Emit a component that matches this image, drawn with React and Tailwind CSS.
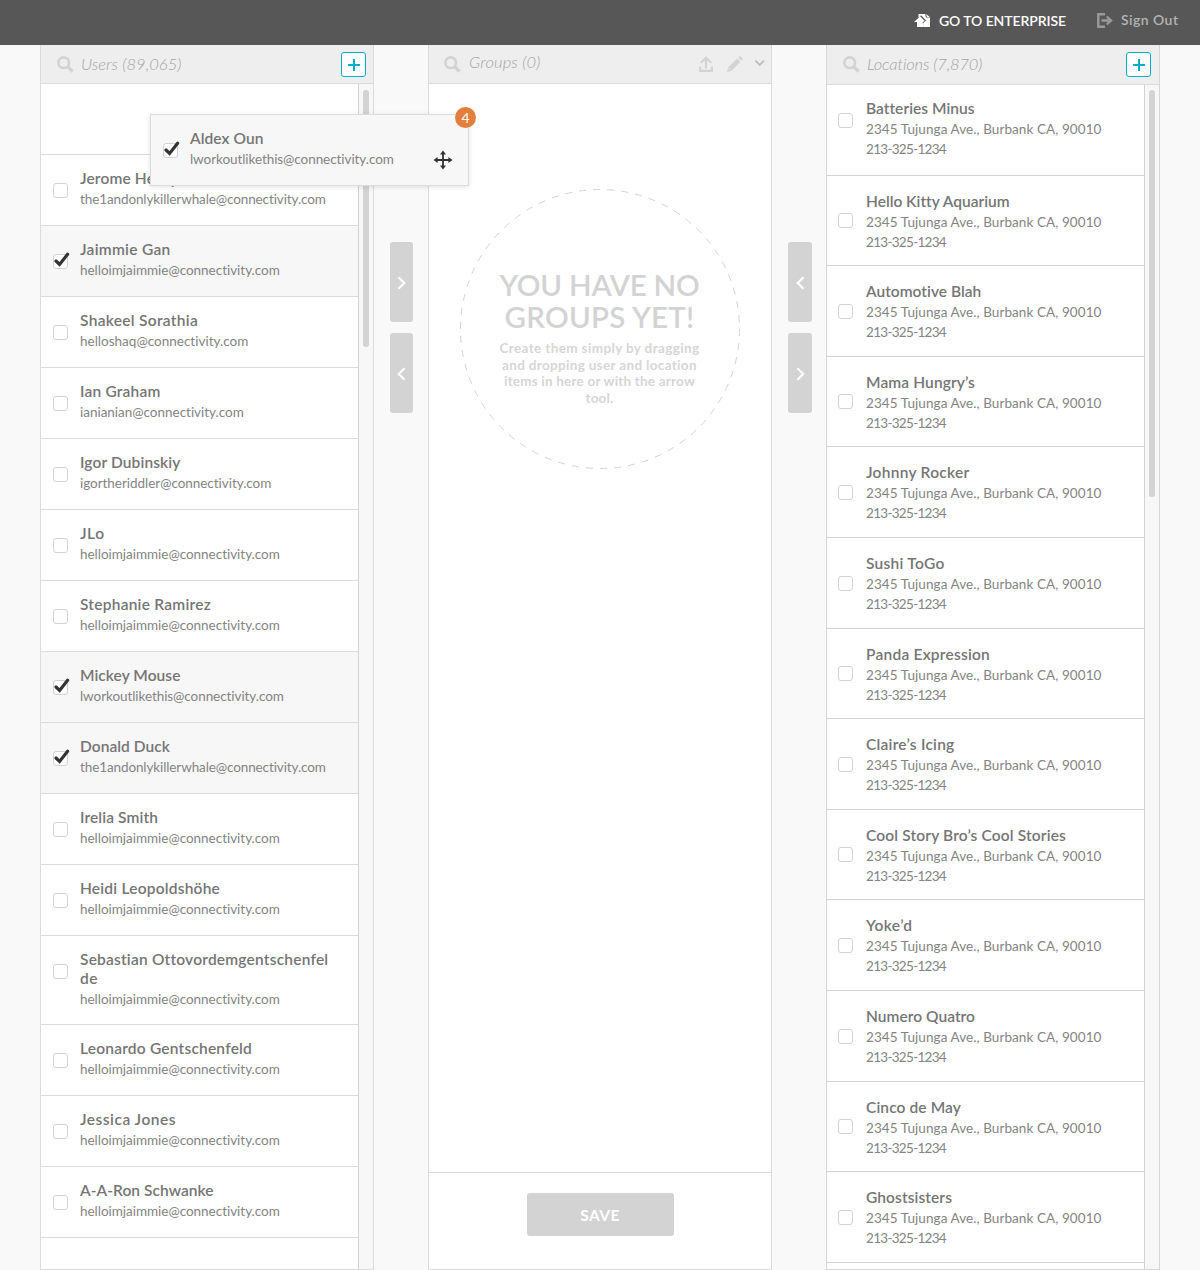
import { useLayoutEffect, useRef, useState } from "react";

/* Text run whose tracking is computed so that it fills a given width. */
function Fit({ w, className = "", children }) {
  const ref = useRef(null);
  const [spacing, setSpacing] = useState(0);
  useLayoutEffect(() => {
    const natural = ref.current.getBoundingClientRect().width;
    setSpacing((w - natural) / children.length);
  }, []);
  return (
    <span className={"block w-max whitespace-pre " + className}>
      <span ref={ref} style={{ letterSpacing: spacing + "px" }}>
        {children}
      </span>
    </span>
  );
}

const HELLO = ["helloimjaimmie@connectivity.com", 200];
const WORKOUT = ["lworkoutlikethis@connectivity.com", 204];
const WHALE = ["the1andonlykillerwhale@connectivity.com", 246];

const users = [
  { name: [["Jerome Henry", 98]], mail: WHALE },
  { name: [["Jaimmie Gan", 90.5]], mail: HELLO, on: true },
  { name: [["Shakeel Sorathia", 118]], mail: ["helloshaq@connectivity.com", 168.5] },
  { name: [["Ian Graham", 80.5]], mail: ["ianianian@connectivity.com", 164] },
  { name: [["Igor Dubinskiy", 100.5]], mail: ["igortheriddler@connectivity.com", 191.5] },
  { name: [["JLo", 24.5]], mail: HELLO },
  { name: [["Stephanie Ramirez", 131]], mail: HELLO },
  { name: [["Mickey Mouse", 100.5]], mail: WORKOUT, on: true },
  { name: [["Donald Duck", 90]], mail: WHALE, on: true },
  { name: [["Irelia Smith", 78]], mail: HELLO },
  { name: [["Heidi Leopoldshöhe", 140]], mail: HELLO },
  { name: [["Sebastian Ottovordemgentschenfel", 248], ["de", 18]], mail: HELLO },
  { name: [["Leonardo Gentschenfeld", 172]], mail: HELLO },
  { name: [["Jessica Jones", 96]], mail: HELLO },
  { name: [["A-A-Ron Schwanke", 133.5]], mail: HELLO },
];

const locations = [
  ["Batteries Minus", 108, "h-[91px]"],
  ["Hello Kitty Aquarium", 143, "h-[90px]"],
  ["Automotive Blah", 115.5, "h-[91px]"],
  ["Mama Hungry’s", 109, "h-[90px]"],
  ["Johnny Rocker", 103.5, "h-[91px]"],
  ["Sushi ToGo", 78.5, "h-[91px]"],
  ["Panda Expression", 124, "h-[90px]"],
  ["Claire’s Icing", 88.5, "h-[91px]"],
  ["Cool Story Bro’s Cool Stories", 200, "h-[90px]"],
  ["Yoke’d", 46.5, "h-[91px]"],
  ["Numero Quatro", 109, "h-[91px]"],
  ["Cinco de May", 95, "h-[90px]"],
  ["Ghostsisters", 86, "h-[91px]"],
];

function SearchIcon() {
  return (
    <svg className="h-[17px] w-[17px] shrink-0" viewBox="0 0 17 17" fill="none" stroke="#d3d3d3">
      <circle cx="6.7" cy="6.7" r="5.3" strokeWidth="2.7" />
      <path d="M10.8 10.8 15.6 15.6" strokeWidth="3.4" />
    </svg>
  );
}

function PlusButton() {
  return (
    <button className="flex h-[25px] w-[25px] shrink-0 items-center justify-center rounded-[3px] border border-[#00adc6] bg-white">
      <svg className="mt-px ml-px h-[12px] w-[12px]" viewBox="0 0 12 12" stroke="#00adc6" strokeWidth="2">
        <path d="M6 0v12M0 6h12" />
      </svg>
    </button>
  );
}

function Checkbox({ on, className = "" }) {
  return (
    <span className={"block h-[15px] w-[15px] shrink-0 rounded-[3px] border border-[#d3d3d3] bg-white " + className}>
      {on && (
        <svg className="-mt-[3px] h-[18px] w-[18px]" viewBox="0 0 18 18" fill="none" stroke="#333" strokeWidth="3.2">
          <path d="M2 9 5.6 12.4 13.6 2.3" strokeLinejoin="miter" strokeLinecap="round" />
        </svg>
      )}
    </span>
  );
}

function UserBody({ user }) {
  return (
    <>
      <Checkbox on={user.on} className="mt-[28px]" />
      <div className="pt-[14px] pl-[12px]">
        {user.name.map(([t, w]) => (
          <Fit key={t} w={w} className="text-[15.5px] leading-[19px] font-semibold text-[#757575]">{t}</Fit>
        ))}
        <Fit w={user.mail[1]} className="mt-px text-[13.5px] leading-[20px] text-[#848484]">{user.mail[0]}</Fit>
      </div>
    </>
  );
}

function Scrollbar({ thumb }) {
  return (
    <div className="w-[15px] shrink-0 border-l border-[#d3d3d3] bg-[#f7f7f7] pl-[4px]">
      <div className={"w-[6px] rounded-[3px] bg-[#d3d3d3] " + thumb} />
    </div>
  );
}

function Arrow({ dir, className }) {
  return (
    <button className={"flex h-[80px] items-center justify-center rounded-[3px] bg-[#d3d3d3] " + className}>
      <svg className="mt-[2px] h-[14px] w-[9px]" viewBox="0 0 9 14" fill="none" stroke="#fff" strokeWidth="2.1">
        <path d={dir === "right" ? "M1.5 1.3 7.2 7 1.5 12.7" : "M7.5 1.3 1.8 7l5.7 5.7"} />
      </svg>
    </button>
  );
}

export default function App() {
  return (
    <div className="relative flex h-[1270px] w-[1200px] flex-col overflow-hidden bg-[#f9f9f9] font-['Lato',sans-serif]">
      <header className="flex h-[45px] shrink-0 items-start justify-end bg-[#575757] pr-[21px]">
        <svg className="mt-[13px] h-[15px] w-[17px]" viewBox="0 0 17 15" fill="#fff">
          <path d="M4.5 4.7V1h6.7l.8 3.5h4V14H9.6V9.6L12 7.4 7.2 2.6z" />
          <path d="M0 9 6.3 3.2 11.8 9H9.8v5H3V9z" />
          <path d="M12.1 1 16 4.3 13 4z" />
          <path d="M6.4 2.7 11.2 7.5 8.6 10.2" fill="none" stroke="#575757" strokeWidth="1" />
        </svg>
        <div className="mt-[12px] ml-[8px] w-[128px]">
          <Fit w={127} className="text-[14px] leading-[18px] font-semibold text-white">GO TO ENTERPRISE</Fit>
        </div>
        <svg className="mt-[13px] ml-[30px] h-[15px] w-[16px]" viewBox="0 0 16 15" fill="none" stroke="#9a9a9a">
          <path d="M8 1.3H1.3v12.4H8" strokeWidth="2.4" />
          <path d="M4.5 7.5h9M9.8 3.5l4.3 4-4.3 4" strokeWidth="2.3" />
        </svg>
        <div className="mt-[11px] ml-[8px] w-[58px]">
          <Fit w={57.5} className="text-[14px] leading-[18px] font-semibold text-[#b4b4b4]">Sign Out</Fit>
        </div>
      </header>

      <main className="flex min-h-0 flex-1 pl-[40px]">
        <section className="flex w-[334px] flex-col border-x border-b border-[#dcdcdc]">
          <div className="flex h-[39px] shrink-0 items-start border-b border-[#dcdcdc] bg-[#eee] pr-[7px] pl-[16px]">
            <div className="mt-[11px] flex"><SearchIcon /></div>
            <div className="mt-[9px] ml-[7px] flex-1">
              <Fit w={100.5} className="text-[16.5px] leading-[20px] font-light text-[#a4a4a4] italic">Users (89,065)</Fit>
            </div>
            <div className="mt-[7px]"><PlusButton /></div>
          </div>
          <div className="flex min-h-0 flex-1">
            <ul className="min-w-0 flex-1 overflow-hidden bg-white">
              <li className="h-[71px] border-b border-[#dcdcdc]" />
              {users.map((u, i) => (
                <li
                  key={i}
                  className={
                    "flex items-start border-b border-[#dcdcdc] pl-[12px] " +
                    (u.name.length > 1 ? "h-[89px] " : "h-[71px] ") +
                    (u.on ? "bg-[#f7f7f7]" : "bg-white")
                  }
                >
                  <UserBody user={u} />
                </li>
              ))}
            </ul>
            <Scrollbar thumb="mt-[6px] h-[257px]" />
          </div>
        </section>

        <div className="mt-[197px] flex w-[54px] flex-col gap-[11px] pl-[16px]">
          <Arrow dir="right" className="w-[23px]" />
          <Arrow dir="left" className="w-[23px]" />
        </div>

        <section className="flex w-[344px] flex-col border-x border-b border-[#dcdcdc] bg-white">
          <div className="flex h-[39px] shrink-0 items-start border-b border-[#dcdcdc] bg-[#eee] pr-[6px] pl-[15px]">
            <div className="mt-[11px] flex"><SearchIcon /></div>
            <div className="mt-[7px] ml-[8px] flex-1">
              <Fit w={71.5} className="text-[16.5px] leading-[20px] font-light text-[#a4a4a4] italic">Groups (0)</Fit>
            </div>
            <svg className="mt-[11px] h-[16px] w-[14px]" viewBox="0 0 14 16" fill="none" stroke="#d3d3d3" strokeWidth="2.2">
              <path d="M7 12.5V2M1.8 6.7 7 1.7l5.2 5M1.1 10.8V14.9h11.8v-4.1" />
            </svg>
            <svg className="mt-[11px] ml-[14px] h-[16px] w-[16px]" viewBox="0 0 16 16" fill="#d3d3d3">
              <path d="M0 16 1.2 11.2 10.2 2.6 13.4 5.8 4.6 14.8zM11.2 1.7 12.4.5q.7-.6 1.4 0L15.5 2.2q.6.7 0 1.4L14.4 4.8z" />
              <path d="M1.7 12.2 3.8 14.3" stroke="#eee" strokeWidth="1" />
            </svg>
            <svg className="mt-[14px] ml-[12px] h-[8px] w-[10px]" viewBox="0 0 10 8" fill="none" stroke="#bdbdbd" strokeWidth="1.8">
              <path d="M.4 1.7 4.7 5.9l4.3-4.2" />
            </svg>
          </div>
          <div className="relative mx-auto mt-[104px] h-[282px] w-[282px]">
            <svg className="absolute inset-0" viewBox="0 0 282 282" fill="none" stroke="#d3d3d3" strokeWidth="1">
              <circle cx="141" cy="141" r="139.5" strokeDasharray="7.07 7.067" />
            </svg>
            <div className="flex flex-col items-center pt-[81px] pr-px">
              <Fit w={200} className="text-[29.5px] leading-[32px] font-semibold text-[#d3d3d3]">YOU HAVE NO</Fit>
              <Fit w={190} className="text-[29.5px] leading-[32px] font-semibold text-[#d3d3d3]">GROUPS YET!</Fit>
              <div className="mt-[7px] flex flex-col items-center text-[13.5px] leading-[16.7px] font-bold text-[#d6d6d6]">
                <Fit w={200}>Create them simply by dragging</Fit>
                <Fit w={195}>and dropping user and location</Fit>
                <Fit w={191}>items in here or with the arrow</Fit>
                <Fit w={28}>tool.</Fit>
              </div>
            </div>
          </div>
          <footer className="mt-auto flex h-[97px] items-start justify-center border-t border-[#dcdcdc] pt-[20px]">
            <button className="flex h-[43px] w-[147px] items-center justify-center rounded-[3px] bg-[#d3d3d3]">
              <Fit w={39.5} className="text-[15.5px] leading-[20px] font-bold text-white">SAVE</Fit>
            </button>
          </footer>
        </section>

        <div className="mt-[197px] flex w-[54px] flex-col gap-[11px] pl-[16px]">
          <Arrow dir="left" className="w-[24px]" />
          <Arrow dir="right" className="w-[24px]" />
        </div>

        <section className="flex w-[334px] flex-col border-x border-b border-[#d6d6d6]">
          <div className="flex h-[40px] shrink-0 items-start border-b border-[#dcdcdc] bg-[#eee] pr-[8px] pl-[16px]">
            <div className="mt-[11px] flex"><SearchIcon /></div>
            <div className="mt-[9px] ml-[7px] flex-1">
              <Fit w={115} className="text-[16.5px] leading-[20px] font-light text-[#a4a4a4] italic">Locations (7,870)</Fit>
            </div>
            <div className="mt-[7px]"><PlusButton /></div>
          </div>
          <div className="flex min-h-0 flex-1">
            <ul className="min-w-0 flex-1 overflow-hidden bg-white">
              {locations.map(([name, w, h], i) => (
                <li key={name} className={"flex items-start border-b border-[#d3d3d3] pl-[11px] " + h}>
                  <Checkbox className={i === 0 ? "mt-[28px]" : h === "h-[90px]" ? "mt-[37px]" : "mt-[38px]"} />
                  <div className={"pl-[13px] " + (i === 0 ? "pt-[14px]" : "pt-[16px]")}>
                    <Fit w={w} className="text-[15.5px] leading-[19px] font-semibold text-[#757575]">{name}</Fit>
                    <Fit w={235.5} className="mt-px text-[13.5px] leading-[20px] text-[#848484]">2345 Tujunga Ave., Burbank CA, 90010</Fit>
                    <Fit w={80} className="text-[13.5px] leading-[20px] text-[#848484]">213-325-1234</Fit>
                  </div>
                </li>
              ))}
            </ul>
            <Scrollbar thumb="mt-[5px] h-[407px]" />
          </div>
        </section>
      </main>

      {/* Card being dragged */}
      <div className="absolute top-[114px] left-[150px] flex h-[72px] w-[319px] items-start border border-[#dcdcdc] bg-[#f7f7f7] pl-[12px] shadow-[0_1px_5px_rgba(0,0,0,0.12)]">
        <UserBody user={{ name: [["Aldex Oun", 73.5]], mail: WORKOUT, on: true }} />
        <svg className="mt-[35px] mr-[15px] ml-auto h-[20px] w-[20px]" viewBox="0 0 20 20" fill="#333">
          <path d="M10 .5 13 4.6h-2.1v4.5h4.5V7l4.1 3-4.1 3v-2.1h-4.5v4.5H13L10 19.5 7 15.4h2.1v-4.5H4.6V13L.5 10l4.1-3v2.1h4.5V4.6H7z" />
        </svg>
        <span className="absolute -top-[8px] -right-[8px] flex h-[21px] w-[21px] items-center justify-center rounded-full bg-[#e27f3c] text-[14px] leading-none text-white">
          4
        </span>
      </div>
    </div>
  );
}
